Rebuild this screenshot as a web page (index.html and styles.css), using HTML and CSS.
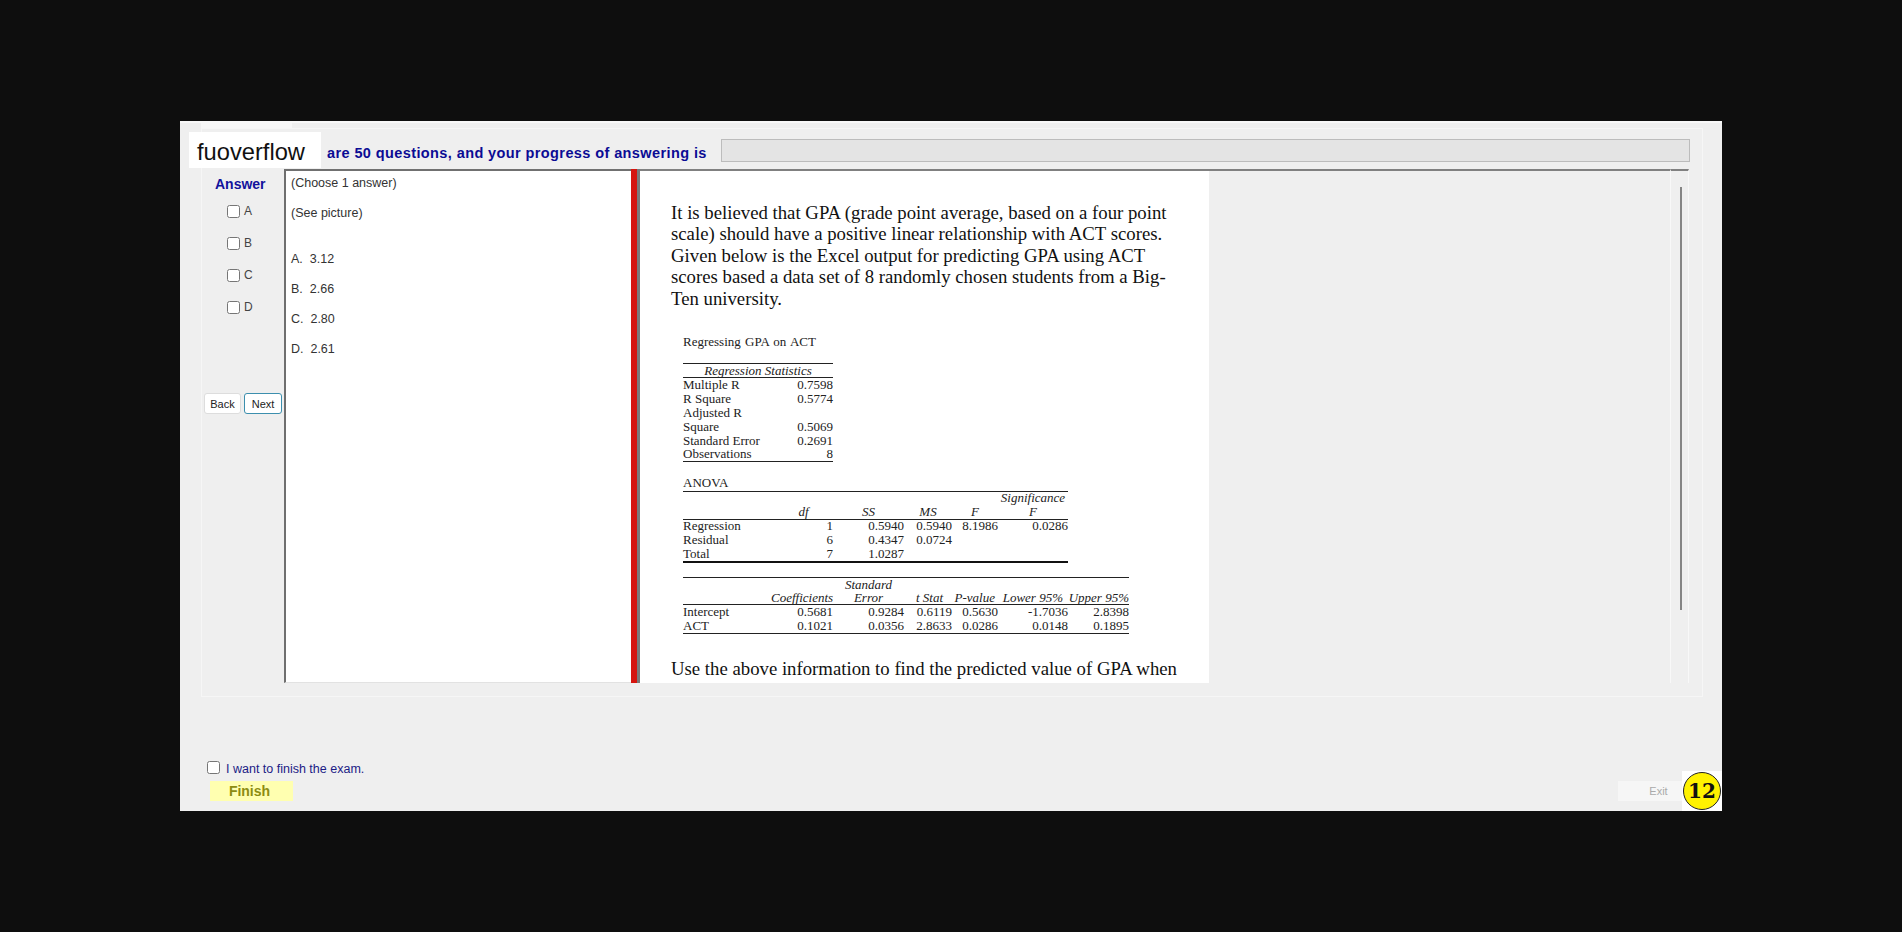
FILE: index.html
```html
<!DOCTYPE html>
<html lang="en">
<head>
  <meta charset="UTF-8">
  <title>Exam</title>
  <link rel="stylesheet" href="styles.css">
</head>
<body>
  <div class="window">
    <div class="top-strip"><div class="tab"></div></div>
    <div class="logo">fuoverflow</div>
    <div class="frame">
      <div class="header">
        <span class="progress-text">are 50 questions, and your progress of answering is</span>
        <div class="progress-bar"></div>
      </div>
      <div class="main">
        <div class="answer-col">
          <div class="answer-title">Answer</div>
          <label class="opt"><input type="checkbox"><span>A</span></label>
          <label class="opt"><input type="checkbox"><span>B</span></label>
          <label class="opt"><input type="checkbox"><span>C</span></label>
          <label class="opt"><input type="checkbox"><span>D</span></label>
          <div class="nav-btns">
            <button class="btn">Back</button>
            <button class="btn btn-next">Next</button>
          </div>
        </div>
        <div class="question">
          <p class="q-line">(Choose 1 answer)</p>
          <p class="q-line q-see">(See picture)</p>
          <p class="q-line q-first">A.&nbsp; 3.12</p>
          <p class="q-line">B.&nbsp; 2.66</p>
          <p class="q-line">C.&nbsp; 2.80</p>
          <p class="q-line">D.&nbsp; 2.61</p>
        </div>
        <div class="divider"></div>
        <div class="content">
          <p class="para">It is believed that GPA (grade point average, based on a four point scale) should have a positive linear relationship with ACT scores. Given below is the Excel output for predicting GPA using ACT scores based a data set of 8 randomly chosen students from a Big-Ten university.</p>
          <div class="excel">
            <div class="excel-title">Regressing GPA on ACT</div>
            <table class="stats">
              <tr class="rule-top rule-bottom"><th colspan="2">Regression Statistics</th></tr>
              <tr><td>Multiple R</td><td class="num">0.7598</td></tr>
              <tr><td>R Square</td><td class="num">0.5774</td></tr>
              <tr><td>Adjusted R</td><td></td></tr>
              <tr><td>Square</td><td class="num">0.5069</td></tr>
              <tr><td>Standard Error</td><td class="num">0.2691</td></tr>
              <tr class="rule-bottom"><td>Observations</td><td class="num">8</td></tr>
            </table>
            <div class="anova-title">ANOVA</div>
            <table class="anova">
              <colgroup><col class="c1"><col class="c2"><col class="c3"><col class="c4"><col class="c5"><col class="c6"></colgroup>
              <tr class="rule-top head"><td></td><td></td><td></td><td></td><td></td><td class="ctr">Significance</td></tr>
              <tr class="rule-bottom head"><td></td><td class="ctr df">df</td><td class="ctr">SS</td><td class="ctr">MS</td><td class="ctr">F</td><td class="ctr">F</td></tr>
              <tr><td>Regression</td><td class="num">1</td><td class="num">0.5940</td><td class="num">0.5940</td><td class="num">8.1986</td><td class="num">0.0286</td></tr>
              <tr><td>Residual</td><td class="num">6</td><td class="num">0.4347</td><td class="num">0.0724</td><td></td><td></td></tr>
              <tr class="rule-thick"><td>Total</td><td class="num">7</td><td class="num">1.0287</td><td></td><td></td><td></td></tr>
            </table>
            <table class="coef">
              <colgroup><col class="c1"><col class="c2"><col class="c3"><col class="c4"><col class="c5"><col class="c6"><col class="c7"></colgroup>
              <tr class="rule-top head"><td></td><td></td><td class="ctr">Standard</td><td></td><td></td><td></td><td></td></tr>
              <tr class="rule-bottom head short"><td></td><td class="num">Coefficients</td><td class="ctr">Error</td><td class="num h-t">t Stat</td><td class="num h-p">P-value</td><td class="num h-l">Lower 95%</td><td class="num">Upper 95%</td></tr>
              <tr><td>Intercept</td><td class="num">0.5681</td><td class="num">0.9284</td><td class="num">0.6119</td><td class="num">0.5630</td><td class="num">-1.7036</td><td class="num">2.8398</td></tr>
              <tr class="rule-bottom tall"><td>ACT</td><td class="num">0.1021</td><td class="num">0.0356</td><td class="num">2.8633</td><td class="num">0.0286</td><td class="num">0.0148</td><td class="num">0.1895</td></tr>
            </table>
          </div>
          <p class="para para-last">Use the above information to find the predicted value of GPA when</p>
        </div>
        <div class="blank"></div>
        <div class="scroll-track"><div class="scroll-thumb"></div></div>
      </div>
    </div>
    <div class="footer">
      <label class="finish-check"><input type="checkbox"><span>I want to finish the exam.</span></label>
      <div class="footer-btns">
        <button class="finish-btn">Finish</button>
        <button class="exit-btn">Exit</button>
      </div>
    </div>
    <div class="badge-box"><div class="badge">12</div></div>
  </div>
</body>
</html>
```

FILE: styles.css
```css
* {
  box-sizing: border-box;
}
html, body {
  height: 100%;
}
body {
  margin: 0;
  padding: 121px 0 0 180px;
  background-color: #0e0e0e;
  font-family: "Liberation Sans", Arial, sans-serif;
  overflow: hidden;
}
p {
  margin: 0;
}
.window {
  position: relative;
  width: 1542px;
  height: 690px;
  background-color: #efefef;
}
.top-strip {
  height: 7px;
  border-top: 2px solid #f8f8f8;
  padding-left: 21px;
}
.tab {
  width: 91px;
  height: 5px;
  background-color: #f7f7f7;
}
.logo {
  position: absolute;
  top: 11px;
  left: 9px;
  width: 132px;
  height: 36px;
  padding: 5px 0 0 8px;
  background-color: #fff;
  color: #111;
  font-size: 23.7px;
  line-height: 31px;
}
.frame {
  margin-left: 21px;
  width: 1502px;
  height: 569px;
  border: 1px solid #f6f6f6;
  padding-bottom: 13px;
}
.header {
  display: flex;
  align-items: center;
  height: 40px;
  padding: 2px 12px 0 125px;
}
.progress-text {
  margin-top: 6px;
  color: #0b0b94;
  font-size: 14.5px;
  font-weight: bold;
  letter-spacing: 0.4px;
  white-space: nowrap;
}
.progress-bar {
  margin-left: auto;
  width: 969px;
  height: 23px;
  background-color: #e4e4e4;
  border: 1px solid #bcbcbc;
}
.main {
  display: flex;
  height: 514px;
  margin-right: 13px;
}
.answer-col {
  width: 82px;
  padding-top: 7px;
  display: flex;
  flex-direction: column;
  flex: none;
}
.answer-title {
  margin-left: 13px;
  height: 16px;
  margin-bottom: 6px;
  color: #12129c;
  font-size: 14px;
  font-weight: bold;
  line-height: 16px;
}
.opt {
  display: flex;
  align-items: center;
  height: 32px;
  padding: 0 0 6px 25px;
  color: #444;
  font-size: 12px;
}
.opt input {
  width: 13px;
  height: 13px;
  margin: 0 4px 0 0;
}
.opt span {
  margin-top: -1px;
}
.nav-btns {
  display: flex;
  gap: 3px;
  margin: 67px 0 0 2px;
}
.btn {
  width: 37px;
  height: 21px;
  padding: 0;
  background-color: #fff;
  border: 1px solid #ddd;
  border-radius: 3px;
  color: #222;
  font-family: "Liberation Sans", sans-serif;
  font-size: 11px;
}
.btn-next {
  width: 38px;
  border-color: #3c8fae;
}
.question {
  width: 347px;
  flex: none;
  padding: 4px 0 0 5px;
  background-color: #fff;
  border-left: 2px solid #6f6f6f;
  border-top: 2px solid #707070;
  border-bottom: 1px solid #e2e2e2;
  color: #333;
  font-size: 12.5px;
}
.q-line {
  height: 16px;
  line-height: 16px;
  margin-bottom: 14px;
}
.q-first {
  margin-top: 30px;
}
.divider {
  width: 9px;
  flex: none;
  background-color: #7a7a7a;
  border-left: 6px solid #d5150f;
}
.content {
  width: 569px;
  flex: none;
  padding: 31px 25px 0 31px;
  background-color: #fff;
  border-top: 2px solid #808080;
  overflow: hidden;
  color: #111;
  font-family: "Liberation Serif", "Times New Roman", serif;
}
.para {
  font-size: 18.75px;
  line-height: 21.4px;
  width: 515px;
}
.para-last {
  white-space: nowrap;
  margin-top: 24px;
}
.excel {
  margin: 25px 0 0 12px;
  font-size: 13px;
  color: #222;
}
.excel-title {
  line-height: 16px;
  margin-bottom: 13px;
  word-spacing: 1px;
}
.excel table {
  border-collapse: separate;
  border-spacing: 0;
  table-layout: fixed;
}
.excel td, .excel th {
  height: 14px;
  padding: 0;
  font-weight: normal;
  line-height: 10px;
  white-space: nowrap;
}
.stats {
  width: 150px;
}
.stats th {
  font-style: italic;
  text-align: center;
}
.num {
  text-align: right;
}
.ctr {
  text-align: center;
}
.excel .rule-top td, .excel .rule-top th {
  height: 15px;
  border-top: 1px solid #222;
}
.excel .rule-bottom td, .excel .rule-bottom th {
  border-bottom: 1px solid #222;
}
.excel .rule-top.rule-bottom th {
  height: 15px;
}
.excel .rule-thick td {
  height: 15px;
  border-bottom: 2px solid #111;
}
.excel .short td {
  height: 13px;
}
.excel .tall td {
  height: 15px;
}
.excel .stats .rule-bottom td {
  padding-bottom: 1px;
}
.excel .anova td {
  padding-bottom: 2px;
}
.head td {
  font-style: italic;
}
.anova-title {
  margin-top: 13px;
  line-height: 16px;
}
.anova {
  width: 385px;
}
.anova .c1 { width: 95px; }
.anova .c2 { width: 55px; }
.anova .c3 { width: 71px; }
.anova .c4 { width: 48px; }
.anova .c5 { width: 46px; }
.anova .c6 { width: 70px; }
.excel .anova .df {
  padding-right: 4px;
}
.coef {
  width: 446px;
  margin-top: 14px;
}
.coef .c1 { width: 88px; }
.coef .c2 { width: 62px; }
.coef .c3 { width: 71px; }
.coef .c4 { width: 48px; }
.coef .c5 { width: 46px; }
.coef .c6 { width: 70px; }
.coef .c7 { width: 61px; }
.excel .h-t {
  padding-right: 9px;
}
.excel .h-p {
  padding-right: 3px;
}
.excel .h-l {
  padding-right: 5px;
}
.blank {
  flex: 1;
  border-top: 2px solid #808080;
}
.scroll-track {
  width: 19px;
  flex: none;
  border-left: 1px solid #f8f8f8;
  border-right: 1px solid #f8f8f8;
  border-top: 2px solid #808080;
  padding: 16px 0 0 9px;
}
.scroll-thumb {
  width: 2px;
  height: 423px;
  background-color: #858585;
}
.footer {
  padding: 63px 39px 0 27px;
}
.finish-check {
  display: flex;
  align-items: center;
  height: 18px;
  color: #1c1c86;
  font-size: 12.5px;
}
.finish-check input {
  width: 13px;
  height: 13px;
  margin: 0 6px 0 0;
  position: relative;
  top: -2px;
}
.footer-btns {
  display: flex;
  justify-content: space-between;
  margin-top: 3px;
}
.finish-btn {
  width: 83px;
  height: 20px;
  margin-left: 3px;
  padding: 0 4px 0 0;
  background-color: #ffffb0;
  border: 0;
  color: #8c8c12;
  font-family: "Liberation Sans", sans-serif;
  font-size: 14px;
  font-weight: bold;
}
.exit-btn {
  width: 65px;
  height: 20px;
  padding: 0 0 0 16px;
  background-color: #f6f6f6;
  border: 0;
  color: #aaa;
  font-family: "Liberation Sans", sans-serif;
  font-size: 11px;
}
.badge-box {
  position: absolute;
  right: 0;
  bottom: 0;
  width: 40px;
  height: 40px;
  background-color: #fff;
}
.badge {
  width: 38px;
  height: 38px;
  margin: 1px;
  background-color: #fff200;
  border: 1px solid #222;
  border-radius: 50%;
  color: #111;
  font-family: "DejaVu Serif", serif;
  font-size: 20px;
  font-weight: bold;
  line-height: 36px;
  text-align: center;
}
```
